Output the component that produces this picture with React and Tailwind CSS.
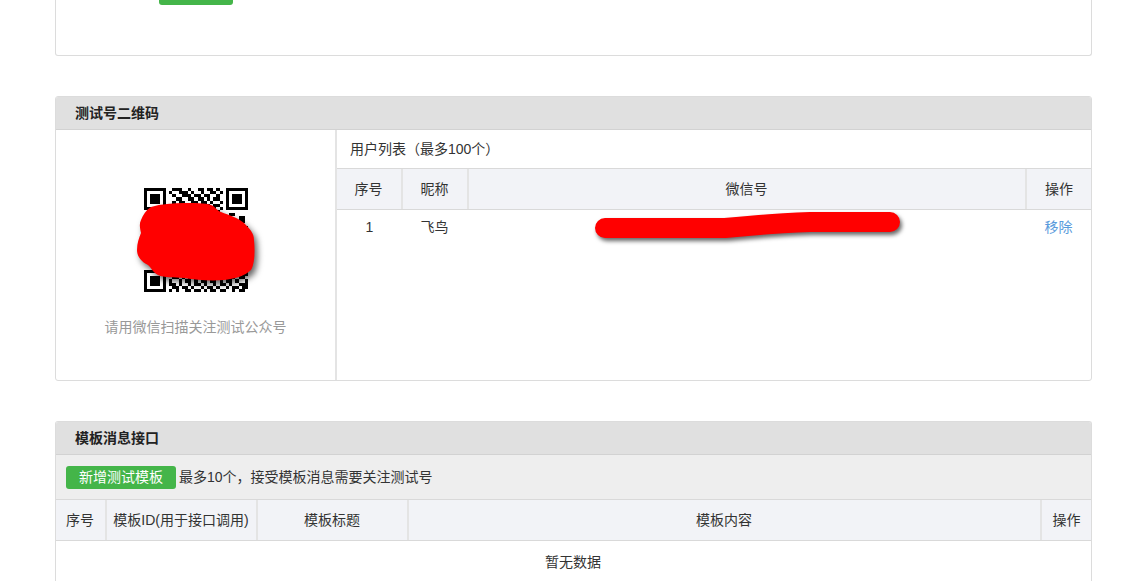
const FONT = "font-['Liberation_Sans','Noto_Sans_CJK_SC',sans-serif]";

const Finder = ({ x, y }) => (
  <g>
    <path d={`M${x} ${y}h7v7h-7z M${x + 1} ${y + 1}v5h5v-5z`} fillRule="evenodd" />
    <rect x={x + 2} y={y + 2} width="3" height="3" />
  </g>
);

// rows of the code that stay visible round the red scribble
const topRows = [
  "01110010011011010",
  "10011101001001101",
  "01001110110110010",
  "00110011011010110",
  "01011001101101001",
  "00100110010110110",
  "10110101101010101",
  "01001011010011010",
];
const bottomRows = [
  "0101101001100110100110101",
  "1011010010110101101001011",
  "0110101101001001010110110",
  "1001011010110110101101001",
  "1101001011010010110100111",
  "0110110100101101001011011",
  "1010011011010110110010110",
];

const QrCode = () => (
  <div className="relative w-[104px] h-[104px] mx-auto">
    <svg viewBox="0 0 33 33" className="w-[104px] h-[104px]" fill="#000" shapeRendering="crispEdges">
      <Finder x={0} y={0} />
      <Finder x={26} y={0} />
      <Finder x={0} y={26} />
      {topRows.map((row, r) =>
        row.split("").map((c, i) =>
          c === "1" ? <rect key={`t${r}-${i}`} x={8 + i} y={r} width="1" height="1" /> : null
        )
      )}
      {bottomRows.map((row, r) =>
        row.split("").map((c, i) =>
          c === "1" ? <rect key={`b${r}-${i}`} x={8 + i} y={26 + r} width="1" height="1" /> : null
        )
      )}
      <path d="M27 8h2v1h-2zM30 9h2v1h-2zM29 10h3v1h-3zM31 12h2v1h-2z" />
    </svg>
    {/* red scribble that hides the code */}
    <svg
      viewBox="0 0 118 77"
      className="absolute left-[-7px] top-[15px] w-[118px] h-[77px] overflow-visible drop-shadow-[3px_4px_3px_rgba(0,0,0,0.6)]"
    >
      <path
        fill="#ff0000"
        d="M14 4C24 1 36 0 47 0C57 0 68 0 74 2C79 4 80 8 84 9C92 12 101 15 107 20C113 26 117 30 117 37C118 47 118 60 114 67C108 73 97 76 87 77C73 78 60 77 47 75C37 74 27 75 21 72C15 69 15 65 11 62C5 59 0 54 0 47C0 40 2 35 4 30C3 25 2 21 4 17C6 12 9 7 14 4Z"
      />
    </svg>
  </div>
);

const Th = ({ className = "", children }) => (
  <div className={`flex items-center justify-center pr-px last:pr-0 border-r-2 last:border-r-0 border-[#e4e4e4] ${className}`}>
    {children}
  </div>
);

const PanelTitle = ({ children }) => (
  <div className="h-[33px] pl-[19px] flex items-center bg-[#e0e0e0] border-b border-[#d2d2d2] text-sm font-bold text-[#222]">
    {children}
  </div>
);

const QrPanel = () => (
  <section className="h-[285px] border border-[#dcdcdc] rounded-[3px] overflow-hidden">
    <PanelTitle>测试号二维码</PanelTitle>
    <div className="flex h-[251px]">
      <div className="w-[281px] shrink-0 border-r-2 border-[#e4e4e4] pt-[58px]">
        <QrCode />
        <p className="mt-[25px] text-center text-sm text-[#999]">请用微信扫描关注测试公众号</p>
      </div>
      <div className="flex-1 min-w-0 text-sm text-[#333]">
        <div className="h-[38px] pl-[13px] flex items-center">用户列表（最多100个）</div>
        <div className="h-[42px] flex bg-[#f2f3f7] border-y border-[#d9d9d9]">
          <Th className="w-[66px]">序号</Th>
          <Th className="w-[66px]">昵称</Th>
          <Th className="flex-1">微信号</Th>
          <Th className="w-[64px]">操作</Th>
        </div>
        <div className="relative h-[34px] flex">
          <div className="w-[66px] pr-px flex items-center justify-center">1</div>
          <div className="w-[66px] pr-[3px] flex items-center justify-center">飞鸟</div>
          <div className="flex-1" />
          <div className="w-[65px] flex items-center justify-center text-[#5a9bdc]">移除</div>
          <svg
            viewBox="0 0 310 30"
            className="absolute left-[258px] top-0 w-[310px] h-[30px] overflow-visible drop-shadow-[2px_3px_2px_rgba(0,0,0,0.6)]"
          >
            <path
              d="M10 18H130C150 16 180 13 215 12H295"
              fill="none"
              stroke="#ff0000"
              strokeWidth="20"
              strokeLinecap="round"
            />
          </svg>
        </div>
      </div>
    </div>
  </section>
);

const TemplatePanel = () => (
  <section className="border-x border-t border-[#dcdcdc] rounded-t-[3px] overflow-hidden text-sm text-[#333]">
    <PanelTitle>模板消息接口</PanelTitle>
    <div className="h-[44px] pl-[10px] flex items-center gap-[3px] bg-[#eeeeee]">
      <span className="w-[110px] h-[23px] flex items-center justify-center bg-[#44b549] rounded-[3px] text-white">
        新增测试模板
      </span>
      <span className="mb-[1px]">最多10个，接受模板消息需要关注测试号</span>
    </div>
    <div className="h-[42px] flex bg-[#f2f3f7] border-y border-[#d9d9d9]">
      <Th className="w-[51px]">序号</Th>
      <Th className="w-[151px]">模板ID(用于接口调用)</Th>
      <Th className="w-[151px]">模板标题</Th>
      <Th className="flex-1">模板内容</Th>
      <Th className="w-[49px]">操作</Th>
    </div>
    <div className="h-[41px] flex items-center justify-center pr-px">暂无数据</div>
  </section>
);

export default function App() {
  return (
    <div className={`h-[581px] w-[1138px] overflow-hidden bg-white ${FONT}`}>
      <div className="w-[1037px] ml-[55px] flex flex-col gap-[40px]">
        <section className="h-[56px] border-x border-b border-[#dcdcdc] rounded-b-[3px]">
          <div className="ml-[103px] w-[74px] h-[5px] bg-[#44b549] rounded-b-[3px]" />
        </section>
        <QrPanel />
        <TemplatePanel />
      </div>
    </div>
  );
}
